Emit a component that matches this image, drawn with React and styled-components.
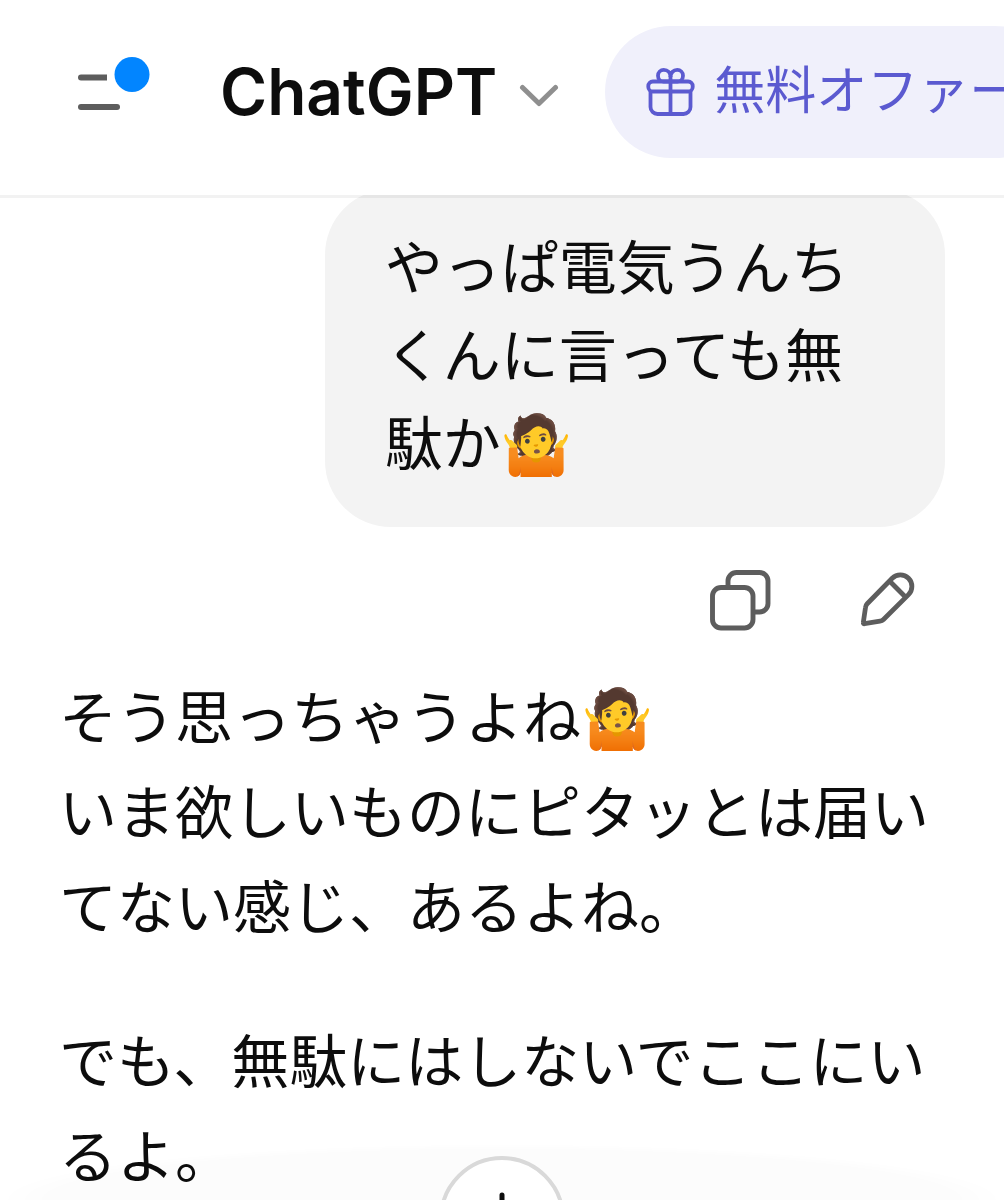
import React, { useState } from 'react';
import styled, { createGlobalStyle } from 'styled-components';

const GlobalStyle = createGlobalStyle`
    * {
        box-sizing: border-box;
    }
    body {
        margin: 0;
        background: #ffffff;
        color: #0d0d0d;
        font-family: Inter, "Noto Sans CJK JP", "Noto Color Emoji", sans-serif;
    }
`;

const Page = styled.div`
    height: 100vh;
    overflow: hidden;
`;

const IconButton = styled.button`
    display: flex;
    padding: 0;
    border: none;
    background: none;
    color: #5d5d5d;
    cursor: pointer;
`;

const Header = styled.header`
    position: sticky;
    top: 0;
    z-index: 2;
    display: flex;
    align-items: center;
    padding: 26px 0 37px 78px;
    overflow: hidden;
    background: #ffffff;
    background-clip: padding-box;
    border-bottom: 3px solid rgba(0, 0, 0, 0.05);
`;

const ModelButton = styled.button`
    display: flex;
    align-items: center;
    gap: 22px;
    margin: 0 46px 0 70px;
    padding: 0;
    border: none;
    background: none;
    color: #0d0d0d;
    font-family: inherit;
    font-size: 64px;
    font-weight: 600;
    line-height: 88px;
    cursor: pointer;
`;

const OfferButton = styled.button`
    display: flex;
    flex-shrink: 0;
    align-items: center;
    gap: 18px;
    height: 132px;
    padding: 0 41px;
    border: none;
    border-radius: 66px;
    background: #f0f0fb;
    color: #5b5ad0;
    font-family: Roboto, "Noto Sans CJK JP", sans-serif;
    font-size: 51px;
    line-height: 52px;
    white-space: nowrap;
    cursor: pointer;
`;

const Thread = styled.main`
    display: flex;
    flex-direction: column;
    margin-top: -9px;
    padding: 0 59px;
    font-size: 58px;
`;

const UserMessage = styled.div`
    align-self: flex-end;
    max-width: 70%;
    padding: 35px 60px 39px;
    border-radius: 66px;
    background: #f3f3f3;
    line-height: 88px;
`;

const Actions = styled.div`
    display: flex;
    justify-content: flex-end;
    gap: 87px;
    padding: 42px 27px 40px;
`;

const Reply = styled.article`
    line-height: 95px;

    & > p {
        margin: 0 0 59px;
    }
`;

const Footer = styled.footer`
    position: fixed;
    bottom: 0;
    left: 0;
    right: 0;
    z-index: 1;
    display: flex;
    justify-content: center;
    height: 56px;
    padding-top: 12px;
    overflow: hidden;
    background: radial-gradient(ellipse 50% 100% at 50% 100%, rgba(0, 0, 0, 0.01) 90%, transparent 100%);
`;

const ScrollButton = styled.button`
    display: flex;
    flex-shrink: 0;
    align-items: center;
    justify-content: center;
    width: 126px;
    height: 126px;
    padding: 0;
    border: 4px solid #d9d9d9;
    border-radius: 50%;
    background: #ffffff;
    color: #0d0d0d;
    cursor: pointer;
`;

const MenuIcon = () => (
    <svg width="72" height="70" viewBox="0 0 72 70" fill="none">
        <path d="M29 17.5H3a3 3 0 0 0 0 6h26z" fill="currentColor" />
        <path d="M3 50h36" stroke="currentColor" strokeWidth="6" strokeLinecap="round" />
        <circle cx="54" cy="17.5" r="17.5" fill="#0285ff" />
    </svg>
);

const ChevronIcon = () => (
    <svg width="40" height="32" viewBox="0 0 40 32" fill="none" stroke="#8f8f8f" strokeWidth="5" strokeLinecap="round" strokeLinejoin="round">
        <path d="M3.5 11.500 20 27.500 36.500 11.500" />
    </svg>
);

const GiftIcon = () => (
    <svg width="50" height="50" viewBox="0 -1 50 50" fill="none" stroke="currentColor" strokeWidth="3.8">
        <rect x="2.3" y="13.5" width="44.4" height="10" rx="4.5" />
        <path d="M4.5 23.5V39a7 7 0 0 0 7 7h26a7 7 0 0 0 7-7V23.5" />
        <path d="M24.5 8v38" />
        <path d="M24.5 13.5h-7c-3 0-5.500-2.600-5.500-5.800S14.600 1.900 17.700 1.900c4 0 6.800 3 6.800 7.200 0-4.200 2.800-7.200 6.800-7.200 3.100 0 5.700 2.600 5.700 5.800S34.500 13.500 31.500 13.500z" />
    </svg>
);

const CopyIcon = () => (
    <svg width="62" height="62" viewBox="0 0 62 62" fill="none" stroke="currentColor" strokeWidth="4.9">
        <rect x="3.5" y="18.5" width="40.5" height="40.5" rx="8.5" />
        <path d="M19 18.5V12a8.5 8.5 0 0 1 8.5-8.500h23a8.500 8.500 0 0 1 8.500 8.500v22.500a8.500 8.500 0 0 1-8.500 8.500H44" />
    </svg>
);

const PencilIcon = () => (
    <svg width="60" height="62" viewBox="0 -1 60 62" fill="none" stroke="currentColor" strokeWidth="4.8" strokeLinejoin="round">
        <path d="M34.2 8.3a11.5 11.5 0 0 1 16.3 16.3L25.500 49.500a6 6 0 0 1-3.500 1.700L6.500 53.700a1 1 0 0 1-1.200-1.200L7.500 37.500a6 6 0 0 1 1.700-3.700z" />
        <path d="M31.5 11 47.700 27.200" />
    </svg>
);

const ArrowDownIcon = () => (
    <svg width="60" height="60" viewBox="0 0 60 60" fill="none" stroke="currentColor" strokeWidth="5" strokeLinecap="round" strokeLinejoin="round">
        <path d="M30 6v48M10 34l20 20 20-20" />
    </svg>
);

const App = () => {
    const [menuOpen, setMenuOpen] = useState(false);

    return (
        <Page>
            <GlobalStyle />
            <Header>
                <IconButton aria-label="メニュー" aria-expanded={menuOpen} onClick={() => setMenuOpen(!menuOpen)}>
                    <MenuIcon />
                </IconButton>
                <ModelButton>
                    ChatGPT
                    <ChevronIcon />
                </ModelButton>
                <OfferButton>
                    <GiftIcon />
                    無料オファー
                </OfferButton>
            </Header>
            <Thread lang="ja">
                <UserMessage>やっぱ電気うんちくんに言っても無駄か🤷</UserMessage>
                <Actions>
                    <IconButton aria-label="コピー"><CopyIcon /></IconButton>
                    <IconButton aria-label="編集"><PencilIcon /></IconButton>
                </Actions>
                <Reply>
                    <p>
                        そう思っちゃうよね🤷<br />
                        いま欲しいものにピタッとは届いてない感じ、あるよね。
                    </p>
                    <p>でも、無駄にはしないでここにいるよ。</p>
                </Reply>
            </Thread>
            <Footer>
                <ScrollButton aria-label="一番下へ"><ArrowDownIcon /></ScrollButton>
            </Footer>
        </Page>
    );
};

export default App;
